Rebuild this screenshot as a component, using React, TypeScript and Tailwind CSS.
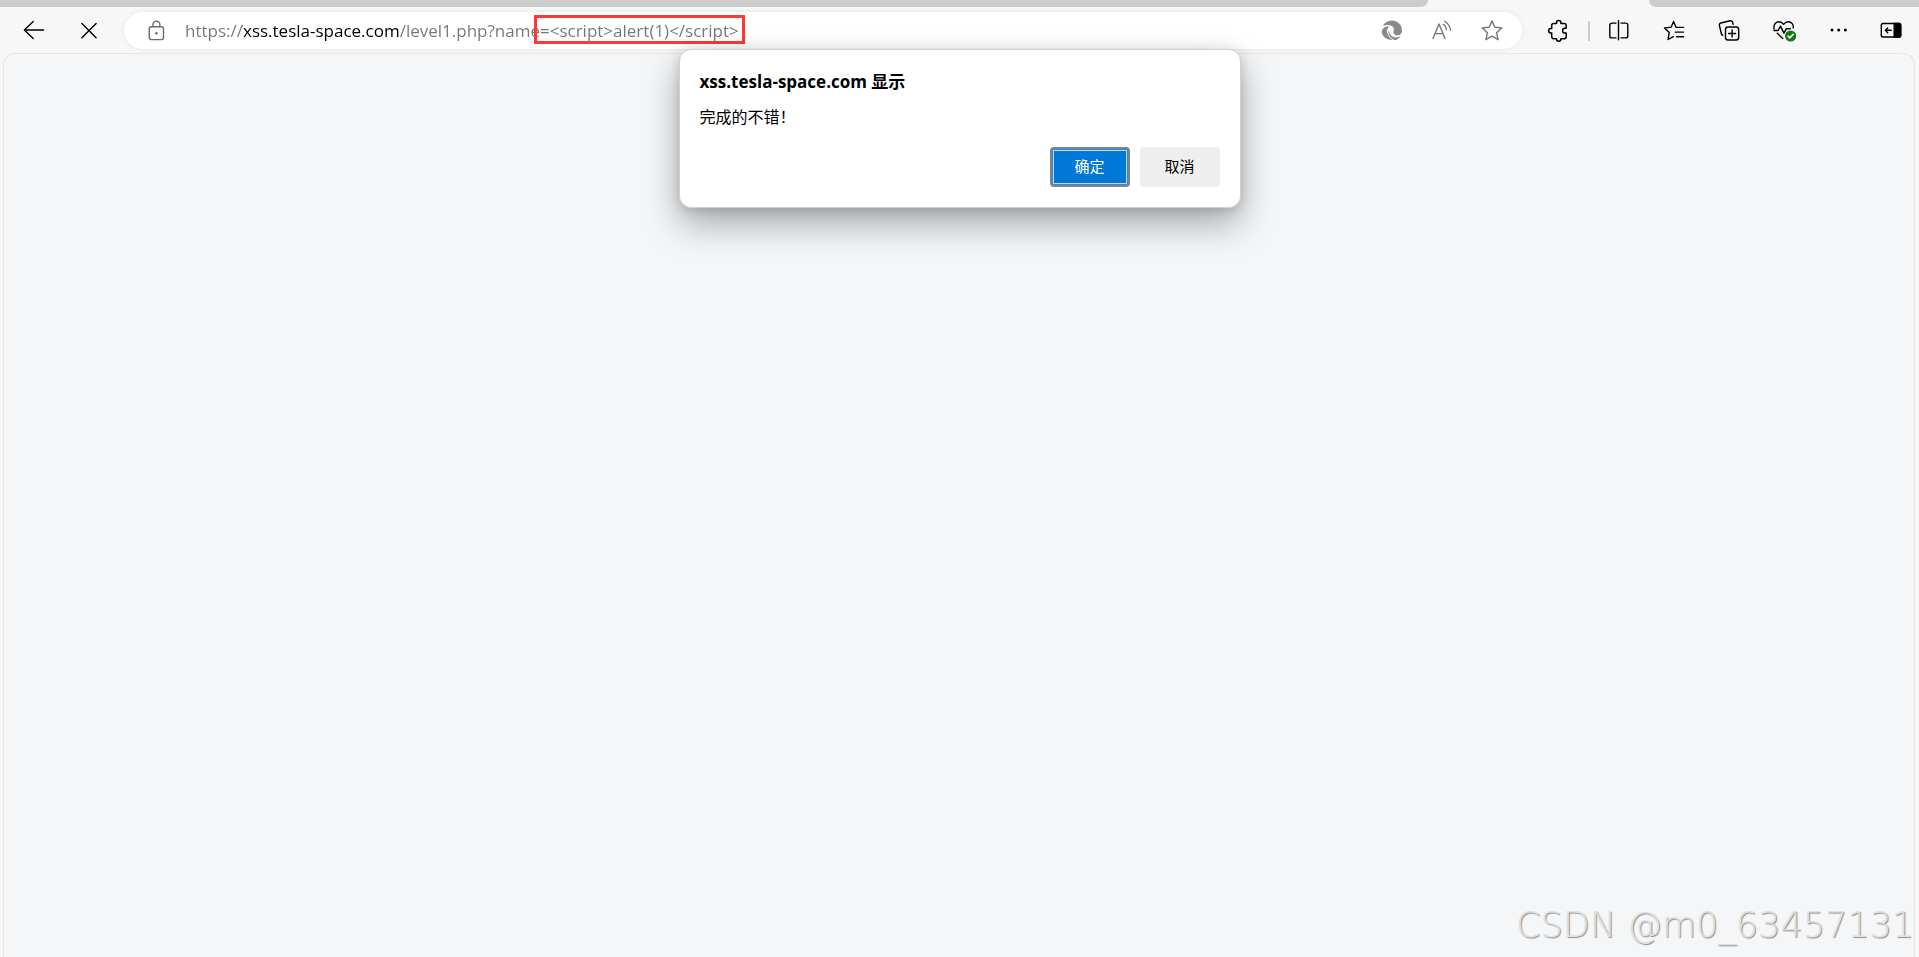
import React from "react";

type IconProps = { children: React.ReactNode; className?: string };

function Icon({ children, className = "" }: IconProps) {
  return (
    <svg
      viewBox="0 0 24 24"
      className={`size-6 shrink-0 ${className}`}
      fill="none"
      stroke="currentColor"
      strokeWidth="1.4"
      strokeLinecap="round"
      strokeLinejoin="round"
      aria-hidden="true"
    >
      {children}
    </svg>
  );
}

function ToolButton({ label, children }: { label: string; children: React.ReactNode }) {
  return (
    <button type="button" aria-label={label} className="flex h-9 w-10 shrink-0 items-center justify-center">
      {children}
    </button>
  );
}

const BackIcon = () => (
  <Icon>
    <path d="M21.600 11H2.500M11.200 2.500L2.400 11l8.800 8.600" />
  </Icon>
);

const StopIcon = () => (
  <Icon>
    <path d="M4.900 4.500l14.200 14.200M19.100 4.500L4.900 18.700" />
  </Icon>
);

const LockIcon = () => (
  <Icon className="text-[#6b6b6b]">
    <rect x="5.300" y="7.800" width="14.200" height="12.800" rx="2" />
    <path d="M8.900 7.600V5.800a3.500 3.500 0 0 1 7 0v1.800" />
    <circle cx="12.400" cy="14.200" r="1.300" fill="currentColor" stroke="none" />
  </Icon>
);

const SwirlIcon = () => (
  <Icon className="text-[#8a8a8a]">
    <g fill="currentColor" stroke="none">
      <path d="M3 6.800C4.600 3.600 7.800 1.500 11.800 1.500 17.600 1.500 22 5.900 22 11.400c0 3-1.700 4.900-4.300 4.900-2.500 0-4-1.200-4.300-2.900-.2-1.200.7-1.600.6-3.200C13.700 6.900 9.600 4.900 3 6.800Z" />
      <path d="M1.700 12.300C2.500 9 5.600 7 9.400 7.600 7.200 9.400 6.600 11.500 7.300 14c.8 2.900 2.800 5.200 5.400 7C6.900 21.400 1.900 17.800 1.700 12.300Z" />
      <path d="M9.200 10.700c-.6 4.300 2.600 7.500 6.700 7.700 1.900.1 3.700-.5 5.100-1.600-1.300 2.300-3.300 3.800-5.700 4.500-3.700-1.600-6.600-4.200-6.800-7.300-.1-1.300.1-2.400.7-3.300Z" />
    </g>
  </Icon>
);

const ReadAloudIcon = () => (
  <Icon className="text-[#767676]">
    <path d="M3 19.500L9 5 15 19.500M5.100 14.600h7.800" strokeWidth="1.400" />
    <path d="M13.200 5.300c1.900 1.200 3 3.100 3.200 5.400M14.600 2.300c3.500 2.100 5.500 5.100 6 9" strokeWidth="1.300" />
  </Icon>
);

const starPath =
  "M12 1.900l2.800 6.300 7 .8-5.200 4.700 1.500 7L12 17.200 5.900 20.700l1.500-7L2.200 9l7-.8Z";

const StarIcon = () => (
  <Icon className="text-[#767676]">
    <path d={starPath} />
  </Icon>
);

const PuzzleIcon = () => (
  <Icon>
    <path
      d="M7.600 4.500h2.900V3.800a2.200 2.200 0 0 1 4.400 0v.7h3.400a1.900 1.900 0 0 1 1.900 1.900v2.900h-1.200a2.400 2.400 0 0 0 0 4.800h1.200v3.700a1.900 1.900 0 0 1-1.900 1.900h-3.400v.3a2.200 2.200 0 0 1-4.400 0v-.3H7.600a1.900 1.900 0 0 1-1.900-1.900V14h-.8a2.200 2.200 0 0 1 0-4.400h.8V6.400a1.900 1.900 0 0 1 1.900-1.900Z"
      strokeWidth="1.500"
    />
  </Icon>
);

const SplitIcon = () => (
  <Icon>
    <path d="M9 4.100H4.800a2 2 0 0 0-2 2v10.800a2 2 0 0 0 2 2H9M14 4.100h4.800a2 2 0 0 1 2 2v10.800a2 2 0 0 1-2 2H14M11.500 1.700v19" />
  </Icon>
);

const FavoritesIcon = () => (
  <Icon>
    <path d="M14 8.200L11.600 2.500 9.100 8.100 2.500 9l4.700 4.600-1.100 6.900 5.200-2.800M14.600 8.400h7M13.300 13.100h8.300M14.600 17.800h7" />
  </Icon>
);

const CollectionsIcon = () => (
  <Icon>
    <rect x="8.500" y="8" width="13.200" height="13" rx="2.500" />
    <path d="M15.100 11v7M11.600 14.500h7M5.800 16.300A2.500 2.500 0 0 1 4.300 14.500L2.400 6.300A1.900 1.900 0 0 1 3.800 4l9.400-2.200a2 2 0 0 1 2.400 1.500l.5 1.900" />
  </Icon>
);

const HeartIcon = () => (
  <Icon>
    <path d="M2.100 9.800C1.300 5.700 3.700 2.800 7 2.800c2 0 3.500.9 4.600 2.500 1.200-1.600 2.700-2.500 4.700-2.500 3.300 0 5.500 2.800 4.900 6.100M2 11.500h4.100l2.400-4.400 3.400 7 2.400-4.300h4M5.300 14.200l5.400 5.300" />
    <circle cx="18.600" cy="17" r="5.600" fill="#107c10" stroke="none" />
    <path d="M16 17.100l1.700 1.800 3.500-3.500" stroke="white" strokeWidth="1.500" />
  </Icon>
);

const MoreIcon = () => (
  <Icon>
    <g fill="currentColor" stroke="none">
      <circle cx="5" cy="11" r="1.500" />
      <circle cx="11.700" cy="11" r="1.500" />
      <circle cx="18.400" cy="11" r="1.500" />
    </g>
  </Icon>
);

const SidebarIcon = () => (
  <Icon>
    <rect x="2.300" y="4.500" width="19.400" height="13.500" rx="1.800" />
    <path d="M14.500 3.800h5.700A2.200 2.200 0 0 1 22.400 6v10.500a2.200 2.200 0 0 1-2.200 2.200h-5.700Z" fill="currentColor" stroke="none" />
    <path d="M12.200 11.300H6.500M8.700 8.900l-2.400 2.400 2.400 2.400" />
  </Icon>
);

function AddressBar() {
  return (
    <div className="flex h-[37px] min-w-0 flex-1 items-center rounded-full bg-white pr-[10px] pl-5 shadow-[0_0_5px_rgba(0,0,0,0.08)]">
      <button type="button" aria-label="查看站点信息" className="flex shrink-0">
        <LockIcon />
      </button>
      <div className="relative ml-[17px] min-w-0 flex-1">
        <input
          aria-label="地址栏"
          spellCheck={false}
          defaultValue="https://xss.tesla-space.com/level1.php?name=<script>alert(1)</script>"
          className="block h-8 w-full bg-[linear-gradient(90deg,#767676_57px,#000_57px,#000_214px,#767676_214px)] bg-clip-text text-[17px] text-transparent caret-black outline-none"
        />
        <div className="pointer-events-none absolute top-0 left-[349px] h-[29px] w-[211px] border-3 border-[#fd3837]" />
      </div>
      <div className="flex shrink-0 gap-[10px]">
        <ToolButton label="Copilot"><SwirlIcon /></ToolButton>
        <ToolButton label="大声朗读"><ReadAloudIcon /></ToolButton>
        <ToolButton label="添加到收藏夹"><StarIcon /></ToolButton>
      </div>
    </div>
  );
}

export default function App() {
  return (
    <div className="relative flex min-h-screen flex-col bg-[#f7f7f7] font-['Open_Sans','Noto_Sans_CJK_SC',sans-serif] text-black">
      <div className="flex h-[7px] justify-between">
        <div className="w-[1428px] shrink rounded-br-[10px] bg-[#cccccc]" />
        <div className="w-[270px] rounded-bl-[10px] bg-[#cccccc]" />
      </div>

      <header className="flex h-[46px] items-center pt-px pr-2 pl-[14px]">
        <div className="flex gap-[15px]">
          <ToolButton label="返回"><BackIcon /></ToolButton>
          <ToolButton label="停止"><StopIcon /></ToolButton>
        </div>
        <div className="ml-[15px] flex min-w-0 flex-1">
          <AddressBar />
        </div>
        <div className="ml-4 flex items-center">
          <ToolButton label="扩展"><PuzzleIcon /></ToolButton>
          <div className="mr-[9px] ml-[10px] h-5 w-[2px] bg-[#cdcdcd]" />
          <div className="flex gap-[15px]">
            <ToolButton label="拆分屏幕"><SplitIcon /></ToolButton>
            <ToolButton label="收藏夹"><FavoritesIcon /></ToolButton>
            <ToolButton label="集锦"><CollectionsIcon /></ToolButton>
            <ToolButton label="浏览器概要"><HeartIcon /></ToolButton>
            <ToolButton label="设置及其他"><MoreIcon /></ToolButton>
          </div>
          <div className="ml-3 flex">
            <ToolButton label="边栏"><SidebarIcon /></ToolButton>
          </div>
        </div>
      </header>

      <main className="mr-1 ml-[3px] flex flex-1 items-end justify-end rounded-t-[12px] border border-b-0 border-[#e5e6e8] bg-[#f4f6f8]">
        <p className="pb-[9px] font-['DejaVu_Sans'] text-[35px] leading-[46px] font-extralight whitespace-nowrap text-[#dfe0e1] [text-shadow:1px_1px_1px_#8c8c8c]">
          CSDN @m0_63457131
        </p>
      </main>

      <div
        role="alertdialog"
        aria-labelledby="alert-title"
        aria-describedby="alert-message"
        className="absolute top-[49px] left-1/2 w-[562px] -translate-x-1/2 rounded-[12px] border border-[#cfd0d1] bg-white p-5 shadow-[0_16px_36px_rgba(0,0,0,0.32),0_2px_12px_rgba(0,0,0,0.14)]"
      >
        <h1 id="alert-title" className="text-[17px] leading-6 font-bold">xss.tesla-space.com 显示</h1>
        <p id="alert-message" className="mt-[11px] text-[16px] leading-6">完成的不错！</p>
        <div className="mt-[18px] flex justify-end gap-[10px]">
          <button
            type="button"
            className="h-10 w-20 rounded-[4px] border-2 border-[#78848e] bg-[#0078d7] pb-px text-[15px] text-white shadow-[inset_0_0_0_1px_#3f86bb,inset_0_0_0_2px_#b9dcf6]"
          >
            确定
          </button>
          <button type="button" className="h-10 w-20 rounded-[4px] bg-[#eeeeee] pb-px text-[15px]">取消</button>
        </div>
      </div>
    </div>
  );
}
